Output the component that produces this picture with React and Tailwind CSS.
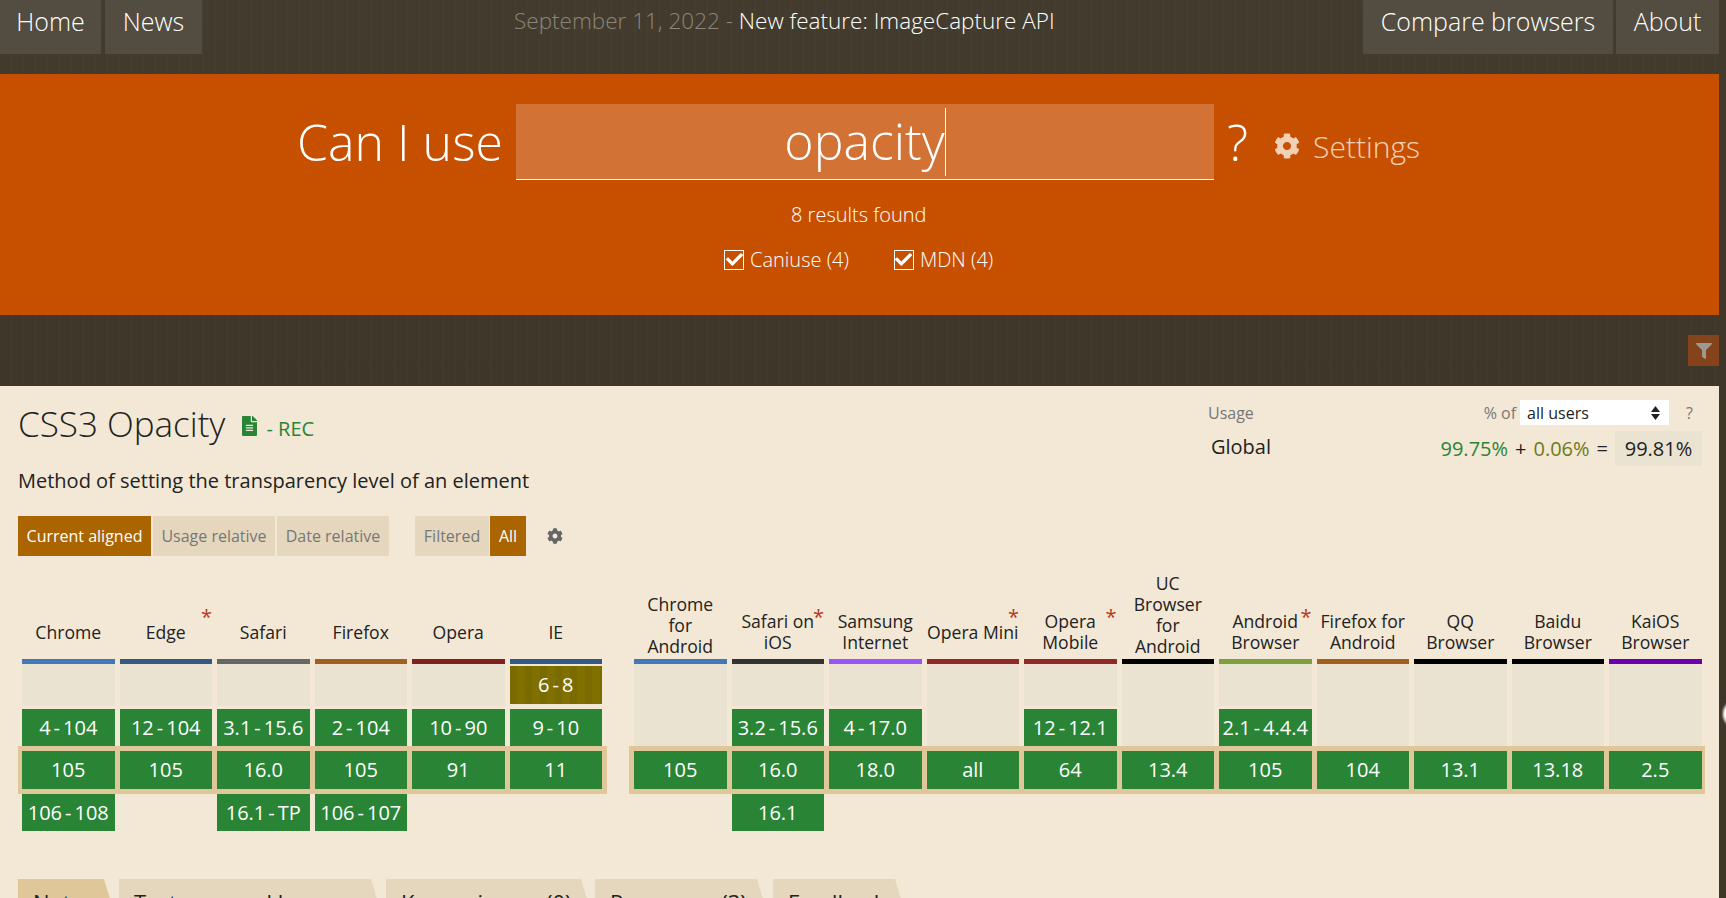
import { FaCheck, FaCog, FaFileAlt, FaFilter } from "react-icons/fa";

const DESKTOP = [
  { name: ["Chrome"], bar: "bg-[#4078b8]", past: "4-104", cur: "105", fut: "106-108" },
  { name: ["Edge"], bar: "bg-[#345a84]", past: "12-104", cur: "105", star: true },
  { name: ["Safari"], bar: "bg-[#666666]", past: "3.1-15.6", cur: "16.0", fut: "16.1-TP" },
  { name: ["Firefox"], bar: "bg-[#a06020]", past: "2-104", cur: "105", fut: "106-107" },
  { name: ["Opera"], bar: "bg-[#7f2020]", past: "10-90", cur: "91" },
  { name: ["IE"], bar: "bg-[#345a84]", past: "9-10", old: "6-8", cur: "11" },
];

const MOBILE = [
  { name: ["Chrome", "for", "Android"], bar: "bg-[#4078b8]", cur: "105" },
  { name: ["Safari on", "iOS"], bar: "bg-[#333333]", past: "3.2-15.6", cur: "16.0", fut: "16.1", star: true },
  { name: ["Samsung", "Internet"], bar: "bg-[#9955f5]", past: "4-17.0", cur: "18.0" },
  { name: ["Opera Mini"], bar: "bg-[#912727]", cur: "all", star: true },
  { name: ["Opera", "Mobile"], bar: "bg-[#912727]", past: "12-12.1", cur: "64", star: true },
  { name: ["UC", "Browser", "for", "Android"], bar: "bg-black", cur: "13.4" },
  { name: ["Android", "Browser"], bar: "bg-[#7ca03c]", past: "2.1-4.4.4", cur: "105", star: true },
  { name: ["Firefox for", "Android"], bar: "bg-[#a06020]", cur: "104" },
  { name: ["QQ", "Browser"], bar: "bg-black", cur: "13.1" },
  { name: ["Baidu", "Browser"], bar: "bg-black", cur: "13.18" },
  { name: ["KaiOS", "Browser"], bar: "bg-[#6a00b0]", cur: "2.5" },
];

const TABS = [
  { label: "Notes", width: "w-[95px]", bg: "bg-[#dfc79a]", ml: "ml-0" },
  { label: "Test on a real browser", width: "w-[261px]", bg: "bg-[#e5d7bd]", ml: "ml-[6px]" },
  { label: "Known issues (0)", width: "w-[204px]", bg: "bg-[#e5d7bd]", ml: "ml-[6px]" },
  { label: "Resources (3)", width: "w-[171px]", bg: "bg-[#e5d7bd]", ml: "ml-[5px]" },
  { label: "Feedback", width: "w-[131px]", bg: "bg-[#e5d7bd]", ml: "ml-[7px]" },
];

// versions are shown with a little air round the dash
function Range({ text }) {
  const parts = text.split("-");
  if (parts.length === 1) return text;
  return (
    <>
      {parts[0]}
      <span className="mx-[3px]">-</span>
      {parts[1]}
    </>
  );
}

function Header({ browser }) {
  const tall = browser.name.length > 2;
  return (
    <div className="relative flex h-[103px] items-end justify-center text-center text-[17.6px] leading-[21px] text-[#222]">
      <div className={tall ? "mb-[2px]" : "mb-[6px] flex min-h-[42px] flex-col justify-center"}>
        {browser.name.map((line) => (
          <div key={line} className="whitespace-nowrap">
            {line}
          </div>
        ))}
      </div>
      {browser.star && (
        <span className="absolute bottom-[32px] right-0 text-[20px] leading-none text-[#b5391b]">*</span>
      )}
    </div>
  );
}

function Past({ browser }) {
  if (browser.old) {
    return (
      <div className="flex h-[82px] flex-col pt-[2px]">
        <div className="flex h-[38px] items-center justify-center bg-[repeating-linear-gradient(90deg,#7a6b00_0,#7a6b00_7px,#807000_7px,#807000_15px)] text-[20px] text-white">
          <Range text={browser.old} />
        </div>
        <div className="mt-[5px] flex h-[37px] items-center justify-center bg-[#2a8436] text-[20px] text-white">
          <Range text={browser.past} />
        </div>
      </div>
    );
  }
  if (browser.past) {
    return (
      <div className="flex h-[82px] flex-col">
        <div className="h-[42px] bg-[#ebe3d1]" />
        <div className="mt-[3px] flex h-[37px] items-center justify-center whitespace-nowrap bg-[#2a8436] text-[20px] text-white">
          <Range text={browser.past} />
        </div>
      </div>
    );
  }
  return <div className="h-[82px] bg-[#ebe3d1]" />;
}

function Group({ browsers, cols, band }) {
  return (
    <div className="flex flex-col">
      <div className={`grid ${cols} gap-x-[5px]`}>
        {browsers.map((b) => (
          <Header key={b.name.join()} browser={b} />
        ))}
        {browsers.map((b) => (
          <div key={b.name.join()} className={`h-[5px] ${b.bar}`} />
        ))}
        {browsers.map((b) => (
          <Past key={b.name.join()} browser={b} />
        ))}
      </div>
      <div className={`${band} bg-[#dfc79a] py-[5px]`}>
        <div className={`grid ${cols} gap-x-[5px]`}>
          {browsers.map((b) => (
            <div key={b.name.join()} className="flex h-[38px] items-center justify-center bg-[#2a8436] text-[20px] text-white">
              {b.cur}
            </div>
          ))}
        </div>
      </div>
      <div className={`grid ${cols} gap-x-[5px]`}>
        {browsers.map((b) =>
          b.fut ? (
            <div key={b.name.join()} className="flex h-[37px] items-center justify-center whitespace-nowrap bg-[#2a8436] text-[20px] text-white">
              <Range text={b.fut} />
            </div>
          ) : (
            <div key={b.name.join()} className="h-[37px]" />
          ),
        )}
      </div>
    </div>
  );
}

function Check({ label }) {
  return (
    <label className="flex items-center gap-[6px] text-[20px] font-light leading-[27px] text-white">
      <span className="flex h-[20px] w-[20px] items-center justify-center border border-white">
        <FaCheck className="h-[17px] w-[17px] text-white" />
      </span>
      {label}
    </label>
  );
}

export default function App() {
  return (
    <div className="relative h-[898px] w-full overflow-hidden bg-[repeating-linear-gradient(90deg,transparent_0,transparent_10px,rgba(255,255,255,0.012)_10px,rgba(255,255,255,0.012)_12px),linear-gradient(180deg,#433c2e,#3d3629_400px)] font-['Open_Sans',sans-serif]">
      {/* top nav */}
      <header className="flex h-[74px] w-[1719px] items-start justify-between text-[25px] font-light text-white">
        <nav className="flex gap-[4px]">
          <a className="flex h-[54px] w-[101px] justify-center bg-[#534d41] pt-[3px]">Home</a>
          <a className="flex h-[54px] w-[97px] justify-center bg-[#534d41] pt-[3px]">News</a>
        </nav>
        <p className="absolute left-[514px] top-[4px] whitespace-nowrap text-[22.5px]">
          <span className="text-[#8b867b]">September 11, 2022 - </span>New feature: ImageCapture API
        </p>
        <nav className="flex gap-[3px]">
          <a className="flex h-[54px] w-[250px] justify-center bg-[#534d41] pt-[3px]">Compare browsers</a>
          <a className="flex h-[54px] w-[103px] justify-center bg-[#534d41] pt-[3px]">About</a>
        </nav>
      </header>

      {/* search */}
      <section className="h-[241px] w-[1719px] bg-[#c65000] pt-[30px] text-white">
        <div className="flex h-[76px] items-center font-light">
          <span className="ml-[297px] w-[219px] text-[50px] leading-none">Can I use</span>
          <div className="flex h-[76px] w-[698px] items-center justify-center border-b border-white bg-[#d27235] text-[50px]">
            <span>opacity</span>
            <span className="h-[68px] w-px bg-white" />
          </div>
          <span className="ml-[13px] text-[50px] leading-none">?</span>
          <span className="ml-[26px] mt-[8px] flex items-center gap-[13px] text-[30px] text-[#f2d0b6]">
            <FaCog className="h-[26px] w-[26px]" />
            Settings
          </span>
        </div>
        <p className="mt-[21px] ml-[791px] text-[20px] font-light leading-[27px]">8 results found</p>
        <div className="mt-[18px] ml-[724px] flex gap-[45px]">
          <Check label="Caniuse (4)" />
          <Check label="MDN (4)" />
        </div>
      </section>

      {/* dark band with the filter button */}
      <div className="flex h-[71px] w-[1719px] justify-end pt-[20px]">
        <button className="flex h-[31px] w-[31px] items-center justify-center bg-[#84431a]">
          <FaFilter className="h-[16px] w-[16px] text-[#9c9a90]" />
        </button>
      </div>

      {/* feature */}
      <main className="h-[512px] w-[1719px] bg-[#f2e8d5] text-[#222]">
        <div className="flex justify-between pr-[17px]">
          <div className="pl-[18px]">
            <div className="flex items-center pt-[18px]">
              <h1 className="text-[35px] font-light leading-[40px]">CSS3 Opacity</h1>
              <FaFileAlt className="ml-[16px] mt-[4px] h-[20px] w-[17px] text-[#2a8436]" />
              <span className="ml-[8px] mt-[9px] text-[20px] text-[#2a8436]">- REC</span>
            </div>
            <p className="mt-[23px] text-[20px] leading-[28px]">Method of setting the transparency level of an element</p>
            <div className="mt-[21px] flex h-[40px] items-stretch text-[16px]">
              <span className="flex w-[133px] items-center justify-center bg-[#aa6400] text-white">Current aligned</span>
              <span className="ml-[2px] flex w-[122px] items-center justify-center bg-[#e5d7bd] text-[#777]">Usage relative</span>
              <span className="ml-[2px] flex w-[112px] items-center justify-center bg-[#e5d7bd] text-[#777]">Date relative</span>
              <span className="ml-[26px] flex w-[74px] items-center justify-center bg-[#e5d7bd] text-[#777]">Filtered</span>
              <span className="ml-px flex w-[36px] items-center justify-center bg-[#aa6400] text-white">All</span>
              <span className="ml-[21px] flex items-center">
                <FaCog className="h-[16px] w-[16px] text-[#666]" />
              </span>
            </div>
          </div>

          <div className="w-[494px] pt-[14px]">
            <div className="flex h-[25px] items-center text-[16px] text-[#777]">
              <span className="flex-1">Usage</span>
              <span className="mr-[4px]">% of</span>
              <div className="flex h-[25px] w-[149px] items-center justify-between bg-white pl-[7px] pr-[9px] text-[#222]">
                all users
                <svg width="9" height="14" viewBox="0 0 9 14" className="fill-[#222]">
                  <path d="M4.5 0 9 6H0z" />
                  <path d="M0 8h9l-4.500 6z" />
                </svg>
              </div>
              <span className="ml-[17px] mr-[9px]">?</span>
            </div>
            <div className="mt-[6px] flex h-[35px] items-center text-[20px]">
              <span className="flex-1 pl-[3px] pb-[3px] text-[#222]">Global</span>
              <span className="text-[#2a8436]">99.75%</span>
              <span className="ml-[7px]">+</span>
              <span className="ml-[7px] text-[#6e7a1e]">0.06%</span>
              <span className="ml-[7px]">=</span>
              <span className="ml-[7px] flex h-[35px] w-[87px] items-center justify-center bg-[#ebe3d1]">99.81%</span>
            </div>
          </div>
        </div>

        {/* support table */}
        <div className="flex pl-[22px]">
          <Group browsers={DESKTOP} cols="grid-cols-[repeat(6,92.5px)]" band="-ml-[4px] pl-[4px] -mr-[5px] pr-[5px]" />
          <div className="ml-[32px]">
            <Group browsers={MOBILE} cols="grid-cols-[repeat(11,92.5px)]" band="-ml-[5px] pl-[5px] -mr-[3px] pr-[3px]" />
          </div>
        </div>

        {/* tabs, cut off by the window */}
        <div className="mt-[48px] flex pl-[18px]">
          {TABS.map((t) => (
            <div
              key={t.label}
              className={`${t.width} ${t.ml} ${t.bg} h-[30px] pl-[15px] pt-[12px] text-[22px] leading-none whitespace-nowrap [clip-path:polygon(0_0,calc(100%-9px)_0,100%_100%,0_100%)]`}
            >
              {t.label}
            </div>
          ))}
        </div>
      </main>

      {/* bit of a floating round button at the window edge */}
      <div className="absolute left-[1723px] top-[700px] h-[28px] w-[28px] rounded-full bg-white blur-[1px]" />
    </div>
  );
}
